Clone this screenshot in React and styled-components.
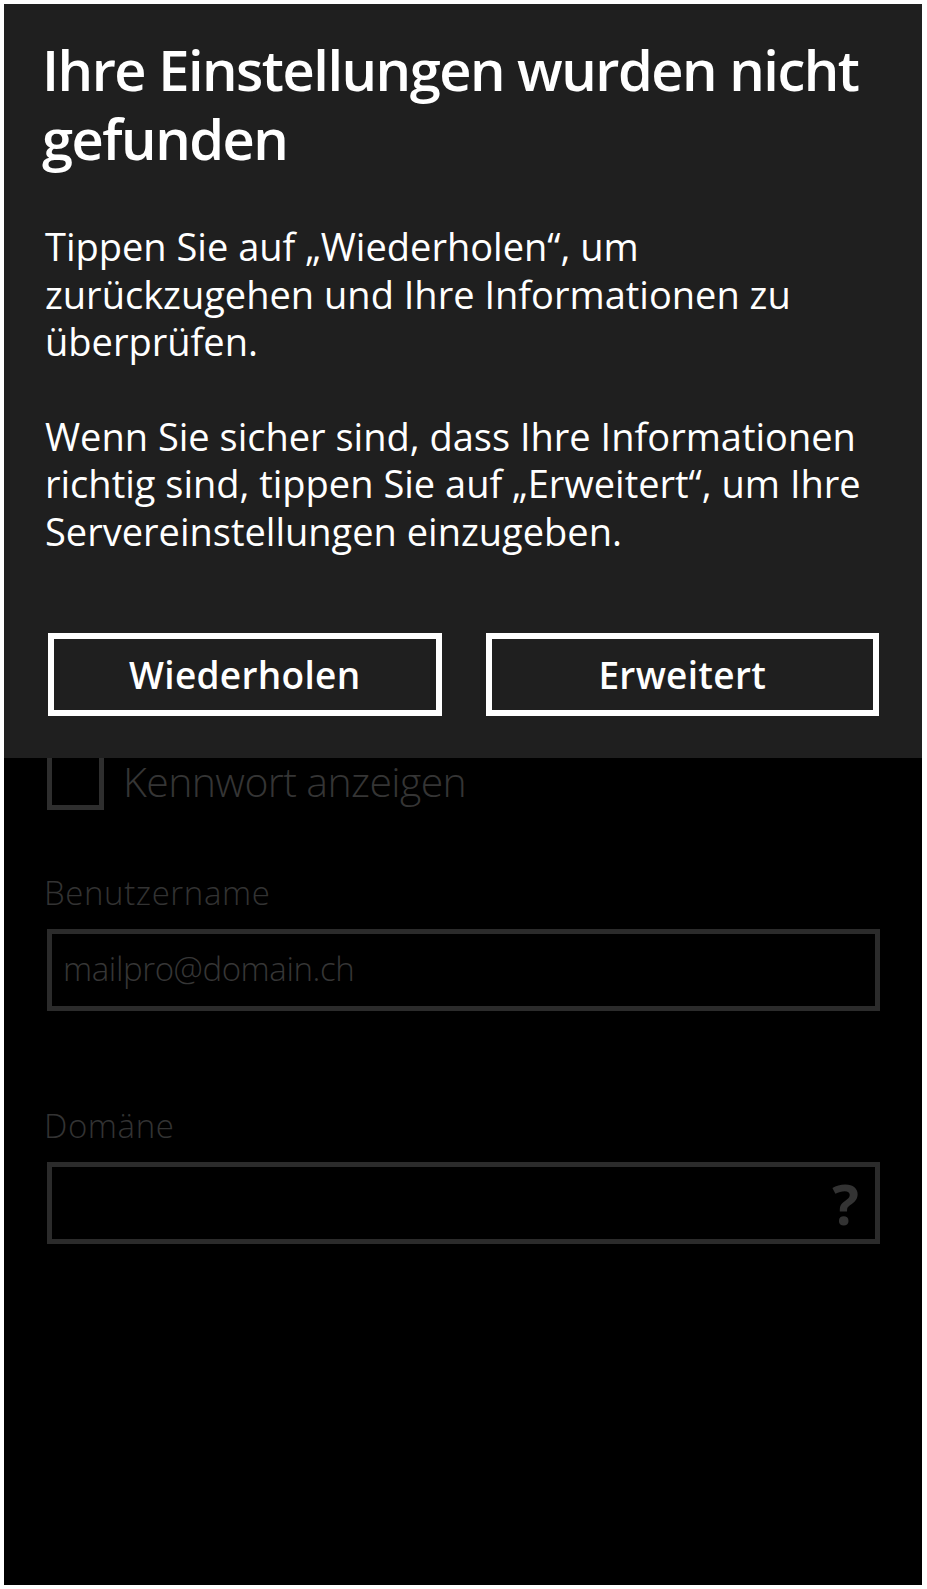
import React from "react";
import styled, { createGlobalStyle } from "styled-components";

const GlobalStyle = createGlobalStyle`
	html, body {
		margin: 0;
		padding: 0;
		background: #ffffff;
	}
	body {
		font-family: "Open Sans", "Noto Sans", sans-serif;
	}
`

const Page = styled.div`
	padding: 4px 5px 4px 4px;
`

const Screen = styled.div`
	position: relative;
	height: 1581px;
	background: #000;
	overflow: hidden;
`

const Dialog = styled.div`
	position: absolute;
	top: 0;
	left: 0;
	right: 0;
	background: #1f1f1f;
	padding: 31px 43px 42px 44px;
	color: #fff;
`

const Title = styled.h1`
	margin: 0 0 50px -6px;
	font-size: 56px;
	line-height: 69px;
	font-weight: 600;
	letter-spacing: -1.5px;
	white-space: nowrap;
`

const Text = styled.p`
	margin: 0 0 ${p => p.$gap}px -3px;
	font-size: 38px;
	line-height: 47.5px;
	font-weight: 400;
	letter-spacing: 0px;
`

const Buttons = styled.div`
	display: grid;
	grid-template-columns: 1fr 1fr;
	gap: 44px;
	margin-top: 78px;
`

const Button = styled.button`
	height: 83px;
	border: 6px solid #fff;
	background: transparent;
	color: #fff;
	font-family: inherit;
	font-size: 37px;
	font-weight: 600;
	letter-spacing: 0.3px;
	padding: 0;
`

const Form = styled.div`
	padding: 749px 42px 0 43px;
	color: #333;
`

const CheckRow = styled.div`
	display: flex;
	align-items: center;
	gap: 19px;
`

const Box = styled.div`
	width: 57px;
	height: 57px;
	box-sizing: border-box;
	border: 5px solid #2e2e2e;
`

const CheckLabel = styled.span`
	font-size: 41px;
	line-height: 57px;
	font-weight: 300;
	color: #353535;
	letter-spacing: -0.6px;
`

const Label = styled.div`
	margin: ${p => p.$top}px 0 0 -3px;
	font-size: 33px;
	line-height: 40px;
	font-weight: 300;
	color: #333;
	letter-spacing: 0.6px;
`

const Field = styled.div`
	margin-top: 16px;
	height: 82px;
	box-sizing: border-box;
	border: 5px solid #2b2b2b;
	display: flex;
	align-items: center;
	justify-content: space-between;
	padding: 0 16px 4px 11px;
`

const Placeholder = styled.span`
	font-size: 33px;
	font-weight: 300;
	color: #363636;
	letter-spacing: -0.4px;
`

const Help = styled.span`
	margin-left: auto;
	font-size: 56px;
	font-weight: 700;
	color: #333;
	line-height: 1;
	padding-top: 4px;
`

export default function App() {
	return (
		<Page>
			<GlobalStyle />
			<Screen>
				<Form>
					<CheckRow>
						<Box />
						<CheckLabel>Kennwort anzeigen</CheckLabel>
					</CheckRow>
					<Label $top={63}>Benutzername</Label>
					<Field>
						<Placeholder>mailpro@domain.ch</Placeholder>
					</Field>
					<Label $top={95}>Domäne</Label>
					<Field>
						<Help>?</Help>
					</Field>
				</Form>

				<Dialog>
					<Title>
						Ihre Einstellungen wurden nicht
						<br />
						gefunden
					</Title>
					<Text $gap={47}>
						Tippen Sie auf „Wiederholen“, um
						<br />
						zurückzugehen und Ihre Informationen zu
						<br />
						überprüfen.
					</Text>
					<Text $gap={0}>
						Wenn Sie sicher sind, dass Ihre Informationen
						<br />
						richtig sind, tippen Sie auf „Erweitert“, um Ihre
						<br />
						Servereinstellungen einzugeben.
					</Text>
					<Buttons>
						<Button>Wiederholen</Button>
						<Button>Erweitert</Button>
					</Buttons>
				</Dialog>
			</Screen>
		</Page>
	);
}
